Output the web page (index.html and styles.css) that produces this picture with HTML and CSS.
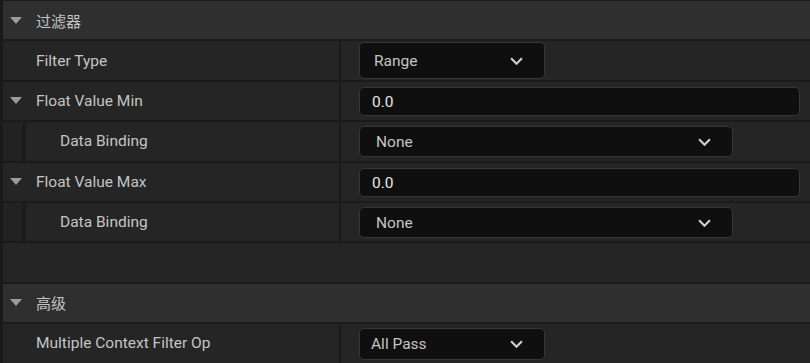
FILE: index.html
```html
<!DOCTYPE html>
<html>
<head>
    <meta charset="utf-8">
    <title>Details</title>
    <link rel="stylesheet" href="styles.css">
</head>
<body>
    <div class="panel">
        <div class="cat"><span class="tri"></span>过滤器</div>

        <div class="row">
            <div class="name">Filter Type</div>
            <div class="value">
                <div class="combo tall short">Range
                    <svg class="chev" viewBox="0 0 12 7"><path d="M1 1l5 5 5-5"/></svg>
                </div>
            </div>
        </div>

        <div class="row">
            <div class="name"><span class="tri"></span>Float Value Min</div>
            <div class="value">
                <div class="num">0.0</div>
            </div>
        </div>

        <div class="row child">
            <div class="name"><span class="indent"></span>Data Binding</div>
            <div class="value">
                <div class="combo mid">None
                    <svg class="chev" viewBox="0 0 12 7"><path d="M1 1l5 5 5-5"/></svg>
                </div>
            </div>
        </div>

        <div class="row">
            <div class="name"><span class="tri"></span>Float Value Max</div>
            <div class="value">
                <div class="num">0.0</div>
            </div>
        </div>

        <div class="row child">
            <div class="name"><span class="indent"></span>Data Binding</div>
            <div class="value">
                <div class="combo mid">None
                    <svg class="chev" viewBox="0 0 12 7"><path d="M1 1l5 5 5-5"/></svg>
                </div>
            </div>
        </div>

        <div class="row blank"></div>

        <div class="cat"><span class="tri"></span>高级</div>

        <div class="row">
            <div class="name">Multiple Context Filter Op</div>
            <div class="value">
                <div class="combo short pass">All Pass
                    <svg class="chev" viewBox="0 0 12 7"><path d="M1 1l5 5 5-5"/></svg>
                </div>
            </div>
        </div>
    </div>
</body>
</html>
```

FILE: styles.css
```css
html, body {
    margin: 0;
    height: 100%;
    background: #1a1a1a;
    overflow: hidden;
}
body {
    font-family: Roboto, "Noto Sans", "Noto Sans CJK SC", sans-serif;
    font-size: 15.5px;
    color: #c4c4c4;
}
.panel {
    padding-left: 3px;
    border-top: 1px solid #1b1b1b;
}
.cat, .row {
    height: 38.4px;
    border-bottom: 2px solid #1b1b1b;
    display: flex;
    align-items: stretch;
}
.cat {
    background: #2f2f2f;
    align-items: center;
    padding-left: 7px;
    font-family: "Noto Sans CJK SC", Roboto, sans-serif;
    font-size: 15px;
}
.row {
    background: #252525;
}
.tri {
    width: 0;
    height: 0;
    border-left: 6px solid transparent;
    border-right: 6px solid transparent;
    border-top: 7px solid #9b9b9b;
    margin-right: 14px;
}
.name {
    width: 338px;
    border-right: 2px solid #1b1b1b;
    display: flex;
    align-items: center;
    padding-left: 33px;
    box-sizing: border-box;
}
.row .name .tri {
    margin-left: -26px;
}
.child .name {
    padding-left: 0;
}
.indent {
    width: 19px;
    height: 100%;
    border-right: 4px solid #1c1c1c;
    background: #222222;
    margin-right: 34px;
}
.value {
    flex: 1;
    display: flex;
    align-items: center;
    padding-left: 18px;
}
.combo, .num {
    box-sizing: border-box;
    background: #0f0f0f;
    border: 1px solid #363636;
    border-radius: 5px;
    display: flex;
    align-items: center;
}
.combo {
    justify-content: space-between;
    padding: 0 21px 0 16px;
}
.combo.tall { height: 37px; padding-left: 14px; }
.combo.short { width: 186px; }
.combo.mid { width: 374px; height: 31px; margin-top: 1px; }
.combo.pass { height: 32px; margin-top: 2px; padding-left: 11px; }
.num {
    width: 441px;
    height: 29px;
    padding-left: 12px;
    color: #e6e6e6;
    margin-top: 2px;
}
.chev {
    width: 13px;
    height: 8px;
    fill: none;
    stroke: #cfcfcf;
    stroke-width: 2;
}
.blank {
    background: #252525;
}
```
